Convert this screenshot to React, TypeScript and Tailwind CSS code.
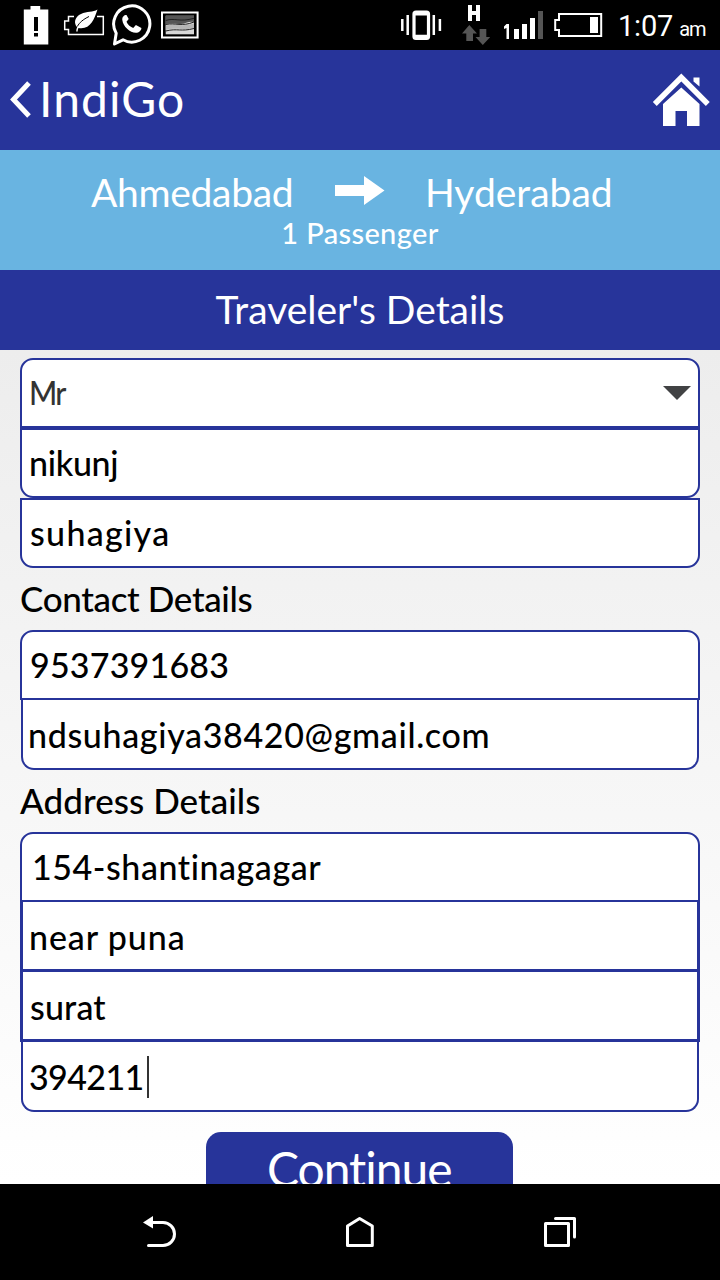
import type { ReactNode } from 'react';

function StatusBar() {
  return (
    <div className="flex h-[50px] shrink-0 items-start bg-black text-white">
      <svg width="26" height="50" viewBox="0 0 26 50" className="ml-[23px] shrink-0">
        <path d="M.8 9.500H7.500V6h9.700v3.500H25.300V44.500H.8Z" fill="#fff" />
        <path d="M11 17h4v14h-4ZM11 33h4v3.500h-4Z" fill="#000" />
      </svg>
      <svg width="42" height="50" viewBox="0 0 42 50" className="ml-[14px] shrink-0">
        <path d="M11 16.500H5.500V21H1.700v8.500H5.500v5H40.300V16.500H34" fill="none" stroke="#fff" strokeWidth="1.500" />
        <path d="M34.500 9.500C30 12.500 24 11 18 14c-4.500 2-6.500 6-5.800 9.500.5 2 1 3 2 3.500-.7 1.500-1 3-1 4.500h1.500c0-1.500.3-2.500.8-3.500C27 30 31 20 34.500 9.500Z" fill="#fff" />
        <path d="M14.300 26.500C16.500 22.500 20 19.500 26 16.500" fill="none" stroke="#000" strokeWidth="1" />
      </svg>
      <svg width="42" height="50" viewBox="0 0 42 50" className="ml-[6px] shrink-0">
        <path d="M5.200 33.200A18.100 18.100 0 1 1 12 39.800L3.500 44Z" fill="none" stroke="#fff" strokeWidth="3" strokeLinejoin="round" />
        <path d="M15.500 15c-2.500 0-4.500 2-4.200 5 .8 6.500 7.700 12.800 13.500 12.800 3.200 0 5.700-2.300 5.600-4.800l-5.500-2.900-2.700 2.900c-3.400-1.300-5.400-3.300-6.700-6.200l2.200-2.800Z" fill="#fff" />
      </svg>
      <svg width="38" height="50" viewBox="0 0 38 50" className="ml-[8px] shrink-0">
        <path d="M1 12.500H36.600V37.500H1Z" fill="#000" stroke="#fff" strokeWidth="2" />
        <path d="M4.700 15.700H33V34.300H4.700Z" fill="#d8d8d8" />
        <path d="M4.700 15.700H33V22c-6-1-9 2.500-15 2-6-.5-9-1-13.300 0Z" fill="#555" />
        <path d="M4.700 25.500c11-2 17 1.500 28.300-2v4.500c-14 3-17-1-28.300 2Z" fill="#b5b5b5" />
        <path d="M4.700 20.500c9-3 14 2 28.300-2.200M4.700 24.500c10-2 16 2.500 28.300-2.500M4.700 31c12-3 15 1 28.300-2.500" fill="none" stroke="#222" strokeWidth="1" />
      </svg>
      <svg width="42" height="50" viewBox="0 0 42 50" className="ml-[201px] shrink-0">
        <rect x="14" y="12" width="14.500" height="26.500" rx="2" fill="none" stroke="#fff" strokeWidth="3.200" />
        <path d="M15 13.300h12.500M15 37h12.500" stroke="#fff" strokeWidth="4.500" />
        <path d="M7.700 15v20M33.800 15v20M2.300 19v12M39.900 19v12" stroke="#fff" strokeWidth="2.500" />
      </svg>
      <svg width="30" height="50" viewBox="0 0 30 50" className="ml-[18px] shrink-0">
        <path d="M10 5v16M18 5v16M10 13h8" stroke="#fff" strokeWidth="4" />
        <path d="M9.300 25 17 33.500h-4V41H6.300v-7.500H2ZM19.600 29h6.700v8h4L22.800 45 15.500 37h4.100Z" fill="#555" />
      </svg>
      <svg width="42" height="50" viewBox="0 0 42 50" className="ml-[13px] shrink-0">
        <path d="M3.500 24H6V39H3.500V28L1 29V26.500Z" fill="#fff" />
        <path d="M11 29h5v10h-5ZM19 24h5v15h-5ZM27 18h5v21h-5Z" fill="#fff" />
        <path d="M35 11h5v28h-5Z" fill="#555" />
      </svg>
      <svg width="50" height="50" viewBox="0 0 50 50" className="ml-[9px] shrink-0">
        <path d="M5 14H47.200V36H5V30H1.200V20H5Z" fill="none" stroke="#fff" strokeWidth="2" />
        <path d="M36 17h8v16h-8Z" fill="#fff" />
      </svg>
      <div className="ml-[14px] flex items-baseline whitespace-nowrap pt-[2px] font-['Roboto',sans-serif] leading-[48px]">
        <span className="text-[29px] tracking-[-0.2px]">1:07</span>
        <span className="ml-[6px] text-[20px] tracking-[-1px]">am</span>
      </div>
    </div>
  );
}

function Header() {
  return (
    <div className="flex h-[100px] shrink-0 items-start bg-[#27349a] text-white">
      <svg width="22" height="100" viewBox="0 0 22 100" className="ml-[9px] shrink-0">
        <path d="M20 33 4.500 49.500 20 66" fill="none" stroke="#fff" strokeWidth="5" />
      </svg>
      <h1 className="ml-[8px] grow text-[48px] leading-[97px] tracking-[1.08px]">IndiGo</h1>
      <svg width="60" height="100" viewBox="0 0 60 100" className="mr-[9px] shrink-0">
        <path d="M3.800 54 30.300 27.500 56.800 54" fill="none" stroke="#fff" strokeWidth="5.500" />
        <path d="M42.500 27.500h6v9l-6-5Z" fill="#fff" />
        <path d="M30.300 37.500 48.500 54V76H36V61H24.500V76H12V54Z" fill="#fff" />
      </svg>
    </div>
  );
}

function RouteBanner() {
  return (
    <div className="flex h-[120px] shrink-0 flex-col bg-[#69b4e1] pt-[16px] text-white">
      <div className="flex h-[50px] text-[39px] leading-[52px]">
        <span className="ml-[91px] w-[243px] tracking-[-0.3px]">Ahmedabad</span>
        <svg width="52" height="50" viewBox="0 0 52 50">
          <path d="M1 19H30V10L50.500 24.500 30 39V30H1Z" fill="#fff" />
        </svg>
        <span className="ml-[39px]">Hyderabad</span>
      </div>
      <div className="text-center text-[29px] font-medium leading-[34px] tracking-[0.36px]">1 Passenger</div>
    </div>
  );
}

function Field({ className, children }: { className: string; children: ReactNode }) {
  return <div className={`h-[70px] whitespace-nowrap border-[#27349a] bg-white text-[34px] font-medium text-black ${className}`}>{children}</div>;
}

function SectionLabel({ children }: { children: ReactNode }) {
  return <h3 className="h-[62px] text-[35px] font-medium leading-[61px] text-black">{children}</h3>;
}

function TravelerForm() {
  return (
    <div className="flex min-h-0 grow flex-col overflow-hidden bg-linear-to-b from-[#ededed] to-white px-[20px] pt-[8px]">
      <div className="shrink-0">
        <Field className="flex justify-between rounded-t-[13px] border-2 pl-[7px] leading-[65px]">
          <span className="origin-left scale-x-[0.92] text-[33px] tracking-[-2px] text-[#333]">Mr</span>
          <svg width="28" height="14" viewBox="0 0 28 14" className="mr-[7px] mt-[26px]">
            <path d="M0 0H28L14 14Z" fill="#414244" />
          </svg>
        </Field>
        <Field className="rounded-b-[13px] border-2 pl-[7px] leading-[65px] tracking-[-0.3px]">nikunj</Field>
        <Field className="rounded-b-[13px] border-2 pl-[8px] leading-[65px] tracking-[1.3px]">suhagiya</Field>
      </div>
      <div className="shrink-0">
        <SectionLabel><span className="tracking-[-0.35px]">Contact Details</span></SectionLabel>
        <Field className="rounded-t-[13px] border-2 pl-[8px] leading-[66px] tracking-[0.2px]">9537391683</Field>
        <Field className="mx-px rounded-b-[13px] border-2 border-t-0 pl-[5px] leading-[70px] tracking-[0.65px]">ndsuhagiya38420@gmail.com</Field>
      </div>
      <div className="shrink-0">
        <SectionLabel><span className="tracking-[0.05px]">Address Details</span></SectionLabel>
        <Field className="rounded-t-[13px] border-2 pl-[10px] leading-[66px] tracking-[0.55px]">154-shantinagagar</Field>
        <Field className="border-x-[3px] border-b-[3px] pl-[6px] leading-[70px] tracking-[0.9px]">near puna</Field>
        <Field className="border-x-[3px] border-b-[3px] pl-[7px] leading-[70px] tracking-[0.14px]">surat</Field>
        <Field className="mx-px flex rounded-b-[13px] border-2 border-t-0 pl-[6px] leading-[70px]">
          <span className="w-[118px] tracking-[-0.6px]">394211</span>
          <span className="mt-[14px] h-[42px] w-[2px] bg-[#333]" />
        </Field>
      </div>
      <button className="ml-[186px] mt-[20px] h-[80px] w-[307px] shrink-0 rounded-[15px] bg-[#27349a] text-left text-[48px] text-white">
        <span className="flex h-full pl-[61px] leading-[73px] tracking-[-1.05px]">Continue</span>
      </button>
    </div>
  );
}

function NavBar() {
  return (
    <div className="flex h-[96px] shrink-0 items-center justify-between bg-black px-[140px]">
      <svg width="40" height="40" viewBox="0 0 40 40" fill="none" stroke="#fff" strokeWidth="3" strokeLinecap="round">
        <path d="M12 10.500H23a11.500 11.500 0 0 1 0 23H8.500" />
        <path d="M3 10.500 13 4V16.500Z" fill="#fff" stroke="none" />
      </svg>
      <svg width="40" height="40" viewBox="0 0 40 40" fill="none" stroke="#fff" strokeWidth="3" strokeLinejoin="round">
        <path d="M7.500 14 19.600 6.500 32.300 14V33.500H7.500Z" />
      </svg>
      <svg width="40" height="40" viewBox="0 0 40 40" fill="none" stroke="#fff" strokeWidth="3" strokeLinecap="round" strokeLinejoin="round">
        <path d="M5.500 11.500H28.500V33.500H5.500ZM15.500 6.500H34.500V25" />
      </svg>
    </div>
  );
}

export default function App() {
  return (
    <div className="flex h-[1280px] w-[720px] flex-col overflow-hidden font-['Lato',sans-serif] [font-variant-ligatures:none]">
      <StatusBar />
      <Header />
      <RouteBanner />
      <h2 className="h-[80px] shrink-0 bg-[#27349a] text-center text-[39px] leading-[78px] text-white">Traveler's Details</h2>
      <TravelerForm />
      <NavBar />
    </div>
  );
}
